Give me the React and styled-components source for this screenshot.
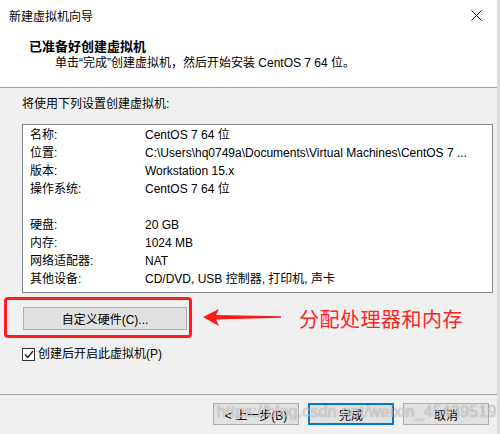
import React from 'react';
import styled, { createGlobalStyle } from 'styled-components';

const GlobalStyle = createGlobalStyle`
  html, body {
    margin: 0;
    padding: 0;
    background: #dcdcdc;
  }
  body {
    font-family: 'Liberation Sans', 'Noto Sans CJK SC', sans-serif;
    font-size: 12px;
    color: #000;
  }
`;

const settings = [
  { name: '名称:', value: 'CentOS 7 64 位' },
  { name: '位置:', value: 'C:\\Users\\hq0749a\\Documents\\Virtual Machines\\CentOS 7 ...' },
  { name: '版本:', value: 'Workstation 15.x' },
  { name: '操作系统:', value: 'CentOS 7 64 位' },
  { name: '', value: '' },
  { name: '硬盘:', value: '20 GB' },
  { name: '内存:', value: '1024 MB' },
  { name: '网络适配器:', value: 'NAT' },
  { name: '其他设备:', value: 'CD/DVD, USB 控制器, 打印机, 声卡' },
];

const Window = styled.div`
  width: 497px;
  height: 434px;
  background: #f0f0f0;
  display: flex;
  flex-direction: column;
  overflow: hidden;
`;

const Header = styled.div`
  background: #fff;
  height: 87px;
  border-bottom: 1px solid #a0a0a0;
  display: flex;
  flex-direction: column;
`;

const TitleBar = styled.div`
  height: 30px;
  display: flex;
  align-items: center;
  justify-content: space-between;
  padding: 0 9px;
`;

const CloseButton = styled.div`
  width: 30px;
  display: flex;
  justify-content: center;
  margin-right: -3px;
`;

const Heading = styled.div`
  margin: 8px 0 0 29px;
  font-size: 13px;
  font-weight: bold;
  line-height: 17px;
`;

const Subtitle = styled.div`
  margin-left: 55px;
  line-height: 17px;
`;

const Body = styled.div`
  flex: 1;
  display: flex;
  flex-direction: column;
  padding-top: 7px;
`;

const Intro = styled.div`
  margin-left: 22px;
  line-height: 18px;
`;

const Summary = styled.div`
  margin: 11px 0 0 22px;
  width: 462px;
  background: #fff;
  border: 1px solid #828790;
  padding: 1px 0 4px 7px;
`;

const SettingRow = styled.div`
  display: flex;
  height: 18px;
  line-height: 18px;
  white-space: nowrap;
`;

const SettingName = styled.div`
  width: 115px;
  flex-shrink: 0;
`;

const HighlightRow = styled.div`
  display: flex;
  align-items: center;
  margin: 4px 0 0 4px;
`;

const RedFrame = styled.div`
  width: 182px;
  height: 35px;
  border: 3px solid #ff1c1c;
  border-radius: 4px;
  padding: 7px 0 0 16px;
  box-sizing: content-box;
  box-sizing: border-box;
  width: 188px;
  height: 41px;
`;

const Button = styled.button`
  box-sizing: border-box;
  width: ${(p) => p.width || 86}px;
  height: ${(p) => p.height || 22}px;
  background: #e1e1e1;
  border: ${(p) => (p.primary ? '2px solid #0078d7' : '1px solid #adadad')};
  font-family: 'Liberation Sans', 'Noto Sans CJK SC', sans-serif;
  font-size: 12px;
  color: #000;
  padding: 0;
  display: flex;
  align-items: center;
  justify-content: center;
`;

const Arrow = styled.svg`
  margin-left: 11px;
  flex-shrink: 0;
`;

const Note = styled.div`
  margin-left: 16px;
  color: #ff2424;
  font-size: 20px;
  font-family: 'Noto Sans CJK SC', sans-serif;
  letter-spacing: 0.5px;
  line-height: 24px;
  margin-top: 3px;
`;

const CheckRow = styled.label`
  display: flex;
  align-items: center;
  margin: 8px 0 0 22px;
  line-height: 16px;
`;

const CheckBox = styled.span`
  box-sizing: border-box;
  width: 13px;
  height: 13px;
  border: 1px solid #333;
  background: #fff;
  display: flex;
  align-items: center;
  justify-content: center;
  margin-right: 3px;
`;

const Footer = styled.div`
  margin-top: auto;
  border-top: 1px solid #a0a0a0;
  height: 40px;
  display: flex;
  justify-content: flex-end;
  align-items: flex-start;
  gap: 9px;
  padding: 8px 8px 0 0;
  box-sizing: border-box;
  position: relative;
`;

const Watermark = styled.div`
  position: absolute;
  left: 217px;
  top: 8px;
  font-size: 16px;
  font-family: 'Liberation Sans', sans-serif;
  color: rgba(255, 255, 255, 0.6);
  text-shadow: 0 0 1px rgba(0, 0, 0, 0.45);
  letter-spacing: 0.2px;
  pointer-events: none;
  white-space: nowrap;
`;

export default function App() {
  return (
    <>
      <GlobalStyle />
      <Window>
        <Header>
          <TitleBar>
            <span>新建虚拟机向导</span>
            <CloseButton>
              <svg width="11" height="11" viewBox="0 0 11 11">
                <path d="M0.5 0.5 L10.5 10.5 M10.5 0.5 L0.5 10.5" stroke="#111" strokeWidth="1" />
              </svg>
            </CloseButton>
          </TitleBar>
          <Heading>已准备好创建虚拟机</Heading>
          <Subtitle>单击“完成”创建虚拟机，然后开始安装 CentOS 7 64 位。</Subtitle>
        </Header>
        <Body>
          <Intro>将使用下列设置创建虚拟机:</Intro>
          <Summary>
            {settings.map((item, index) => (
              <SettingRow key={index}>
                <SettingName>{item.name}</SettingName>
                <span>{item.value}</span>
              </SettingRow>
            ))}
          </Summary>
          <HighlightRow>
            <RedFrame>
              <Button width={164} height={23}>自定义硬件(C)...</Button>
            </RedFrame>
            <Arrow width="80" height="20" viewBox="0 0 80 20">
              <path d="M0 9 L16 1 L13 7 L78 8.2 L78 9.8 L13 11.5 L16 18 Z" fill="#ff1a1a" />
            </Arrow>
            <Note>分配处理器和内存</Note>
          </HighlightRow>
          <CheckRow>
            <CheckBox>
              <svg width="10" height="9" viewBox="0 0 10 9">
                <path d="M1 4.5 L3.8 7.5 L9 1" stroke="#222" strokeWidth="1.4" fill="none" />
              </svg>
            </CheckBox>
            创建后开启此虚拟机(P)
          </CheckRow>
          <Footer>
            <Button>&lt; 上一步(B)</Button>
            <Button primary>完成</Button>
            <Button>取消</Button>
            <Watermark>https://blog.csdn.net/weixin_45439519</Watermark>
          </Footer>
        </Body>
      </Window>
    </>
  );
}
